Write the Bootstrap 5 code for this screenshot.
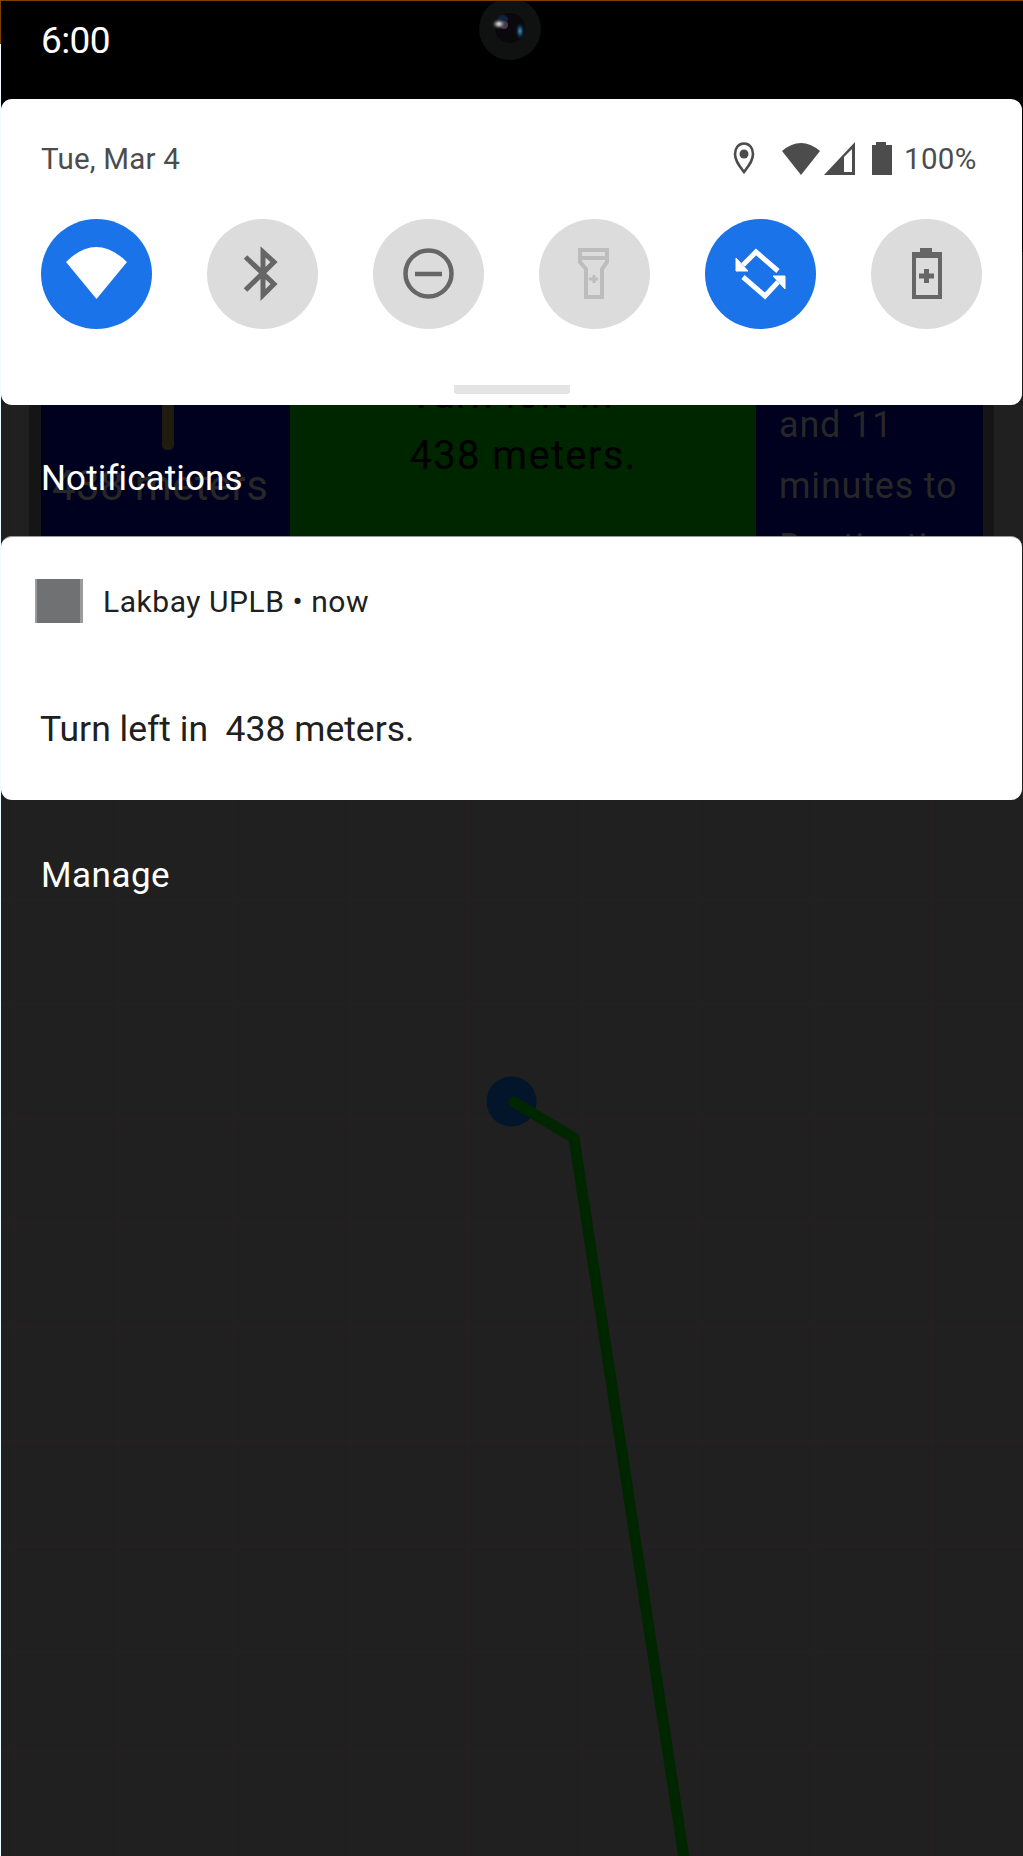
<!DOCTYPE html>
<html lang="en">
<head>
<meta charset="utf-8">
<meta name="viewport" content="width=device-width, initial-scale=1">
<title>Notification shade</title>
<link href="https://cdn.jsdelivr.net/npm/bootstrap@5.3.0/dist/css/bootstrap.min.css" rel="stylesheet">
<style>
body{font-family:Roboto,"Liberation Sans",sans-serif;background:#202020;color:#fff;overflow:hidden}
.phone{width:1023px;height:1856px;border-top:1px solid #7d4000;background:#202020}
.edge{left:0;top:0;width:1px;height:100%;background:linear-gradient(#7d4000 43px,#effcff 43px)}
.ln{line-height:1;white-space:nowrap}
.statusbar{height:98px;background:#000;padding:21px 0 0 41px}
.clock{font-size:37px;letter-spacing:-.6px}
.lens{left:479px;top:0}
.corner{background:linear-gradient(#000 50%,#1c1c1c 50%)}
.qs{height:306px;margin:0 1px;border-radius:11px;background:#fff;color:#4c4c4c;padding:41px 40px 0 40px}
.datetxt{font-size:29.5px;letter-spacing:.2px;padding-top:4px}
.pct{font-size:29.5px;letter-spacing:.3px;padding-top:4px;margin-left:3px}
.indicators{width:253px}
.tiles{margin-top:43px}
.tile{width:111px;height:110px;border-radius:50%;background:#dcdcdc}
.tile.on{background:#1a73e8}
.grip{width:116px;height:9px;background:#e4e4e4;border-radius:0 0 3px 3px;margin:56px 0 0 413px}
.peek{height:131px}
.strip{height:131px;margin:0 29px;border:solid #151515;border-width:0 11px 0 12px}
.navy{background:#00001f;color:#272727}
.green{background:#002600;color:#000}
.arrowcol{width:249px;padding:0 0 0 11px}
.stem{width:12px;height:45px;background:#1f1c0f;border-radius:0 0 5px 5px;margin-left:110px}
.dist{font-size:42px;letter-spacing:.4px;margin-top:15px}
.turncol{width:466px;font-size:40px;letter-spacing:1.3px;line-height:61px}
.turncol p{margin:-41px 0 0}
.etacol{font-size:36px;letter-spacing:.8px;line-height:61px;padding-left:23px}
.etacol p{margin:-10px 0 0;white-space:nowrap}
.head{left:41px;top:56px;font-size:35px;letter-spacing:.1px}
.note{height:264px;margin:0 1px;border-radius:11px;background:#fff;color:#202020;border-top:1px solid #98989f;padding:42px 0 0 34px}
.app{width:48px;height:44px;background:#707173;border:solid #9b9b9b;border-width:0 3px 0 2px}
.appname{font-size:30px;letter-spacing:.55px;margin-left:20px;padding-top:2px}
.msg{font-size:35.5px;margin:89px 0 0 5px}
.manage{font-size:35px;letter-spacing:.5px;margin:58px 0 0 41px}
.routemap{left:0;top:0}
</style>
</head>
<body>
<main class="phone position-relative overflow-hidden">
<svg class="routemap position-absolute" width="1023" height="1855">
<path d="M0 899.500H1023M0 1003.500H1023M0 1118.500H1023M0 1222.500H1023M0 1326.500H1023M0 1440.500H1023M0 1545.500H1023M0 1650.500H1023M0 1750.500H1023M13.500 400V1856M118.500 400V1856M234.500 400V1856M350.500 400V1856M467.500 400V1856M582.500 400V1856M698.500 400V1856M815.500 400V1856M931.500 400V1856" stroke="#241f20" stroke-width="3"/>
<circle cx="511.500" cy="1100.500" r="25" fill="#02152a"/>
<path d="M514 1101L574 1137L684 1857" fill="none" stroke="#002600" stroke-width="11" stroke-linejoin="round" stroke-linecap="round"/>
</svg>
<header class="statusbar position-relative">
<div class="ln clock">6:00</div>
<svg class="lens position-absolute" width="62" height="60">
<defs><radialGradient id="glow"><stop offset="0" stop-color="#dfe5dc"/><stop offset=".35" stop-color="#8b9290"/><stop offset="1" stop-color="#101111" stop-opacity="0"/></radialGradient><radialGradient id="blue"><stop offset="0" stop-color="#4d8fb8"/><stop offset=".5" stop-color="#0e3550"/><stop offset="1" stop-color="#0a080d" stop-opacity="0"/></radialGradient></defs>
<circle cx="31" cy="28" r="31" fill="#101111"/><circle cx="31" cy="27" r="15" fill="#0a080d"/>
<ellipse cx="24" cy="18" rx="5" ry="4" fill="#142e55" opacity=".7"/><ellipse cx="25" cy="24" rx="4" ry="4" fill="#4d3a52"/><ellipse cx="20" cy="23" rx="8" ry="6" fill="url(#glow)"/><ellipse cx="41" cy="30" rx="5" ry="9" fill="url(#blue)"/>
</svg>
</header>
<div class="corner position-relative"><section class="qs">
<div class="d-flex align-items-center justify-content-between">
<div class="ln datetxt">Tue, Mar 4</div>
<div class="indicators d-flex align-items-center">
<svg class="flex-shrink-0" width="172" height="36" viewBox="0 0 172 36" fill="#4c4c4c"><path d="M15 3.500C9.500 3.500 6 8 6 14C6 21 10.500 26 15 32C19.500 26 24 21 24 14C24 8 20.500 3.500 15 3.500Z" fill="none" stroke="#4c4c4c" stroke-width="2.600"/><circle cx="15" cy="14" r="4.500"/><path d="M53 11Q72-5 91 11L72 35Z"/><path fill-rule="evenodd" d="M95 35L126 2V35ZM115 17L123 9V32H115Z"/><path d="M147 2h10v3h6v30h-20V5h4z"/></svg>
<div class="ln pct">100%</div></div>
</div>
<div class="tiles d-flex justify-content-between">
<div class="tile on"><svg class="d-block" width="111" height="110"><path d="M25 43Q55 13 86 43L55.500 80Z" fill="#fff"/></svg></div>
<div class="tile"><svg class="d-block" width="111" height="110"><path d="M38.500 38L67 65L56 76V33L67 43L38.500 71" fill="none" stroke="#666" stroke-width="5"/></svg></div>
<div class="tile"><svg class="d-block" width="111" height="110"><circle cx="55.500" cy="54.500" r="23" fill="none" stroke="#666" stroke-width="4.500"/><path d="M42 55H69" stroke="#666" stroke-width="4.500"/></svg></div>
<div class="tile"><svg class="d-block" width="111" height="110"><path d="M41 31H68V43L63 50V78H47V50L41 43ZM41 39H68" fill="none" stroke="#bdbdbd" stroke-width="4"/><path d="M50 60H59M55 56V64" stroke="#bdbdbd" stroke-width="3"/></svg></div>
<div class="tile on"><svg class="d-block" width="111" height="110"><path d="M73 52L51 33L38 46M38 58L60 77L73 63" fill="none" stroke="#fff" stroke-width="5"/><path d="M31 39V52H43ZM80 70V57H68Z" fill="#fff" stroke="#fff"/></svg></div>
<div class="tile"><svg class="d-block" width="111" height="110"><path d="M43 36H69V78H43Z" fill="none" stroke="#666" stroke-width="4"/><path d="M41 33H71V39H41ZM49 29H61V34H49Z" fill="#666"/><path d="M48 57H63M55.500 50V64" stroke="#666" stroke-width="5"/></svg></div>
</div>
<div class="grip"></div>
</section></div>
<section class="peek position-relative">
<div class="strip d-flex overflow-hidden">
<div class="navy arrowcol"><div class="stem"></div><div class="ln dist">438 meters</div></div>
<div class="green turncol text-center"><p>Turn left in&nbsp;&nbsp;<br>438 meters.</p></div>
<div class="navy etacol flex-fill"><p>and 11<br>minutes to<br>Destination</p></div>
</div>
<h2 class="ln head position-absolute fw-normal m-0">Notifications</h2>
</section>
<section class="note position-relative">
<div class="d-flex align-items-center"><div class="app"></div><div class="ln appname">Lakbay UPLB • now</div></div>
<div class="ln msg">Turn left in&nbsp; 438 meters.</div>
</section>
<div class="ln manage position-relative">Manage</div>
<div class="edge position-absolute"></div>
</main>
<script src="https://cdn.jsdelivr.net/npm/bootstrap@5.3.0/dist/js/bootstrap.bundle.min.js"></script>
</body>
</html>
